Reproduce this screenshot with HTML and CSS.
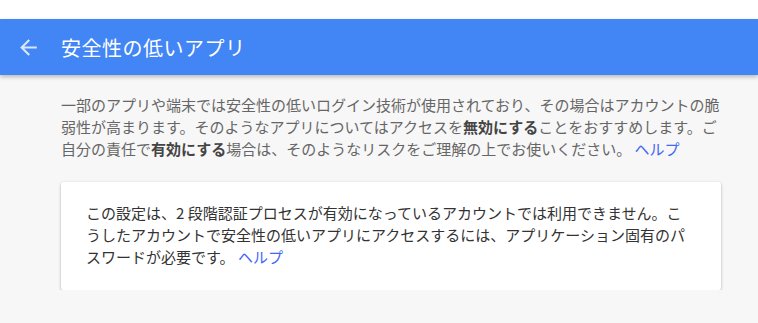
FILE: index.html
```html
<!DOCTYPE html>
<html lang="ja">
<head>
  <meta charset="UTF-8">
  <title>安全性の低いアプリ</title>
  <link rel="stylesheet" href="styles.css">
</head>
<body>

<div class="top-gap"></div>
<header class="appbar">
  <svg class="back" width="25" height="25" viewBox="0 0 24 24">
    <path d="M20 11H7.83l5.59-5.59L12 4l-8 8 8 8 1.41-1.41L7.83 13H20v-2z" fill="currentColor"/>
  </svg>
  <h1>安全性の低いアプリ</h1>
</header>

<main class="content">
  <p class="intro">一部のアプリや端末では安全性の低いログイン技術が使用されており、その場合はアカウントの脆弱性が高まります。そのようなアプリについてはアクセスを<b>無効にする</b>ことをおすすめします。ご自分の責任で<b>有効にする</b>場合は、そのようなリスクをご理解の上でお使いください。 <a href="#">ヘルプ</a></p>

  <div class="card">
    <p>この設定は、2 段階認証プロセスが有効になっているアカウントでは利用できません。こうしたアカウントで安全性の低いアプリにアクセスするには、アプリケーション固有のパスワードが必要です。 <a href="#">ヘルプ</a></p>
  </div>
</main>

</body>
</html>
```

FILE: styles.css
```css
body {
  margin: 0;
  background-color: #f7f7f7;
  font-family: "Noto Sans CJK JP", "Noto Sans", sans-serif;
}
.top-gap {
  height: 19px;
  background: white;
}
.appbar {
  height: 56px;
  background-color: #4285f4;
  color: white;
  display: flex;
  align-items: center;
  box-shadow: 0 2px 4px rgba(0, 0, 0, 0.25);
  position: relative;
}
.back {
  margin-left: 16px;
  margin-right: 20px;
  color: rgba(255, 255, 255, 0.8);
}
.appbar h1 {
  margin: 0;
  font-size: 20px;
  font-weight: normal;
  letter-spacing: 0.5px;
}
.content {
  padding: 19px 37px 0 61px;
}
.intro {
  margin: 0;
  font-size: 15px;
  line-height: 22px;
  color: #666;
}
.intro b, .card b {
  color: #444;
}
a {
  color: #4267f4;
  text-decoration: none;
}
.card {
  margin-top: 22px;
  background: white;
  border-radius: 2px;
  box-shadow: 0 1px 3px rgba(0, 0, 0, 0.3);
  padding: 20px 25px 22px 25px;
}
.card p {
  margin: 0;
  font-size: 15px;
  line-height: 22px;
  color: #333;
}
```
